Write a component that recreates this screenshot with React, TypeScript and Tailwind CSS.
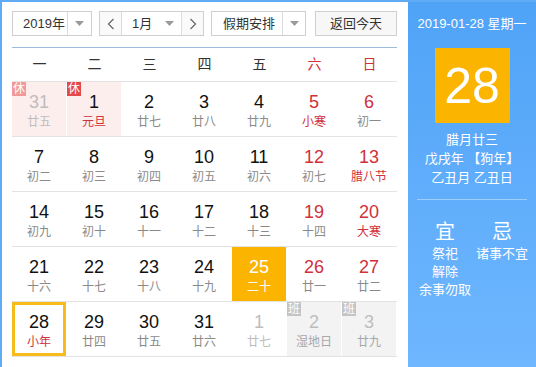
import React from "react";

type Cell = {
  d: number;
  l: string;
  kind?: "other" | "we";
  fest?: boolean;
  badge?: "休" | "班";
  bg?: "pink" | "gray";
  today?: boolean;
  sel?: boolean;
};

const rows: Cell[][] = [
  [
    { d: 31, l: "廿五", kind: "other", badge: "休", bg: "pink" },
    { d: 1, l: "元旦", fest: true, badge: "休", bg: "pink" },
    { d: 2, l: "廿七" },
    { d: 3, l: "廿八" },
    { d: 4, l: "廿九" },
    { d: 5, l: "小寒", kind: "we", fest: true },
    { d: 6, l: "初一", kind: "we" },
  ],
  [
    { d: 7, l: "初二" },
    { d: 8, l: "初三" },
    { d: 9, l: "初四" },
    { d: 10, l: "初五" },
    { d: 11, l: "初六" },
    { d: 12, l: "初七", kind: "we" },
    { d: 13, l: "腊八节", kind: "we", fest: true },
  ],
  [
    { d: 14, l: "初九" },
    { d: 15, l: "初十" },
    { d: 16, l: "十一" },
    { d: 17, l: "十二" },
    { d: 18, l: "十三" },
    { d: 19, l: "十四", kind: "we" },
    { d: 20, l: "大寒", kind: "we", fest: true },
  ],
  [
    { d: 21, l: "十六" },
    { d: 22, l: "十七" },
    { d: 23, l: "十八" },
    { d: 24, l: "十九" },
    { d: 25, l: "二十", today: true },
    { d: 26, l: "廿一", kind: "we" },
    { d: 27, l: "廿二", kind: "we" },
  ],
  [
    { d: 28, l: "小年", fest: true, sel: true },
    { d: 29, l: "廿四" },
    { d: 30, l: "廿五" },
    { d: 31, l: "廿六" },
    { d: 1, l: "廿七", kind: "other" },
    { d: 2, l: "湿地日", kind: "other", badge: "班", bg: "gray" },
    { d: 3, l: "廿九", kind: "other", badge: "班", bg: "gray" },
  ],
];

const font = { fontFamily: '"Liberation Sans", Arial, "Noto Sans CJK SC", sans-serif' };

function Arrow() {
  return (
    <svg width="9" height="5" viewBox="0 0 9 5">
      <polygon points="0,0 9,0 4.5,5" fill="#9a9a9a" />
    </svg>
  );
}

function Chevron({ dir }: { dir: "l" | "r" }) {
  return (
    <svg width="8" height="12" viewBox="0 0 8 12">
      <polyline
        points={dir === "l" ? "6.5,1 1.5,6 6.5,11" : "1.5,1 6.5,6 1.5,11"}
        fill="none"
        stroke="#666"
        strokeWidth="1.2"
      />
    </svg>
  );
}

function DayCell({ c }: { c: Cell }) {
  let numColor = "text-[#111]";
  let lunColor = "text-[#8a8a8a]";
  if (c.kind === "we") numColor = "text-[#d0313a]";
  if (c.kind === "other") {
    numColor = "text-[#bdbdbd]";
    lunColor = "text-[#bdbdbd]";
  }
  if (c.fest) lunColor = "text-[#d0313a]";
  if (c.kind === "other" && c.bg === "gray") lunColor = "text-[#a8a8a8]";
  if (c.today) {
    numColor = "text-white";
    lunColor = "text-white";
  }
  let bg = "";
  if (c.bg === "pink") bg = "bg-[#fdeeee]";
  if (c.bg === "gray") bg = "bg-[#f3f3f3]";
  if (c.today) bg = "bg-[#fbb400]";
  const border = c.sel ? "border-[3px] border-[#f7bb1c]" : "";
  return (
    <div className="w-[55px] h-[54px]">
      <div
        className={`relative w-[54px] h-[54px] flex flex-col items-center box-border ${bg} ${border} ${
          c.sel ? "pt-[6px]" : "pt-[9px]"
        }`}
      >
        {c.badge && (
          <div
            className={`absolute left-0 top-0 w-[14px] h-[14px] flex items-center justify-center text-[12px] leading-none text-white ${
              c.badge === "休"
                ? c.kind === "other"
                  ? "bg-[#f29a9a]"
                  : "bg-[#e44848]"
                : "bg-[#c4c4c4]"
            }`}
          >
            {c.badge}
          </div>
        )}
        <div className={`text-[18px] leading-[22px] ${numColor}`}>{c.d}</div>
        <div className={`text-[12px] leading-[16px] mt-[1px] ${lunColor}`}>{c.l}</div>
      </div>
    </div>
  );
}

export default function App() {
  const weekdays = ["一", "二", "三", "四", "五", "六", "日"];
  return (
    <div
      className="w-[536px] h-[367px] flex bg-white border-l-2 border-t-2 border-[#5fabf5] overflow-hidden"
      style={font}
    >
      <div className="w-[406px] pl-[10px] pt-[9px] flex flex-col">
        {/* controls */}
        <div className="flex h-[25px] text-[13px] text-[#333]">
          <div className="w-[80px] h-[25px] border border-[#cfcfcf] flex bg-white">
            <div className="w-[54px] flex items-center pl-[10px]">2019年</div>
            <div className="flex-1 border-l border-[#dcdcdc] flex items-center justify-center">
              <Arrow />
            </div>
          </div>
          <div className="ml-[7px] w-[105px] h-[25px] border border-[#cfcfcf] flex bg-white">
            <div className="w-[22px] border-r border-[#dcdcdc] flex items-center justify-center bg-[#fafafa]">
              <Chevron dir="l" />
            </div>
            <div className="w-[59px] flex items-center pl-[10px] relative">
              1月
              <div className="absolute right-[7px] top-[9px] flex">
                <Arrow />
              </div>
            </div>
            <div className="flex-1 border-l border-[#dcdcdc] flex items-center justify-center bg-[#fafafa]">
              <Chevron dir="r" />
            </div>
          </div>
          <div className="ml-[7px] w-[95px] h-[25px] border border-[#cfcfcf] flex bg-white">
            <div className="w-[70px] flex items-center pl-[11px]">假期安排</div>
            <div className="flex-1 border-l border-[#dcdcdc] flex items-center justify-center">
              <Arrow />
            </div>
          </div>
          <div className="ml-[9px] w-[82px] h-[25px] border border-[#cfcfcf] bg-[#f7f7f7] flex items-center justify-center">
            返回今天
          </div>
        </div>
        <div className="mt-[11px] w-[385px] h-px bg-[#9dbddc]" />
        {/* header */}
        <div className="w-[385px] h-[34px] border-b border-[#e3e3e3] flex">
          {weekdays.map((w, i) => (
            <div
              key={w}
              className={`w-[55px] flex items-center justify-center text-[14px] ${
                i >= 5 ? "text-[#d0313a]" : "text-[#333]"
              }`}
            >
              {w}
            </div>
          ))}
        </div>
        {rows.map((r, ri) => (
          <div key={ri} className="w-[385px] h-[55px] border-b border-[#e3e3e3] flex">
            {r.map((c, ci) => (
              <DayCell key={ci} c={c} />
            ))}
          </div>
        ))}
      </div>
      {/* right panel */}
      <div className="w-[128px] h-full bg-gradient-to-b from-[#4fa3f7] to-[#6fb7ff] flex flex-col items-center text-white pt-[13px]">
        <div className="text-[13px] leading-[18px] whitespace-nowrap">2019-01-28 星期一</div>
        <div className="mt-[15px] w-[75px] h-[75px] bg-[#fbb400] flex items-center justify-center text-[50px] leading-none">
          28
        </div>
        <div className="mt-[7px] text-[13px] leading-[19px] text-center">
          <div>腊月廿三</div>
          <div className="whitespace-nowrap">戊戌年 【狗年】</div>
          <div>乙丑月 乙丑日</div>
        </div>
        <div className="mt-[12px] w-[110px] h-px bg-white/40" />
        <div className="mt-[19px] w-full pl-[10px] flex">
          <div className="w-[54px] flex flex-col items-center">
            <div className="text-[20px] leading-[26px]">宜</div>
            <div className="text-[13px] leading-[18px] text-center whitespace-nowrap">
              <div>祭祀</div>
              <div>解除</div>
              <div>余事勿取</div>
            </div>
          </div>
          <div className="w-[60px] flex flex-col items-center">
            <div className="text-[20px] leading-[26px]">忌</div>
            <div className="text-[13px] leading-[18px] text-center whitespace-nowrap">
              <div>诸事不宜</div>
            </div>
          </div>
        </div>
      </div>
    </div>
  );
}
